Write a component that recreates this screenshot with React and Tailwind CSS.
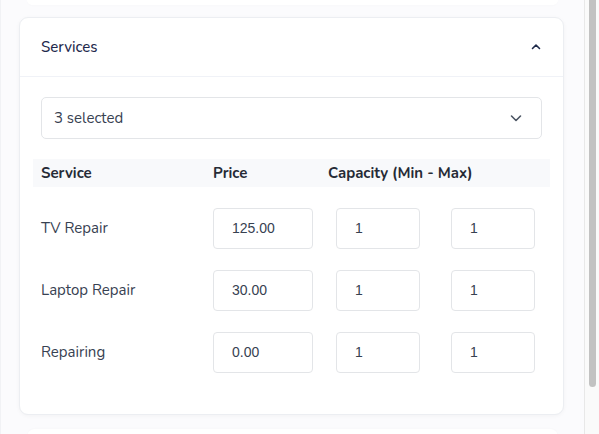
import React from "react";

const font = { fontFamily: "Nunito, Lato, 'Noto Sans', sans-serif" };

function ChevronUp() {
  return (
    <svg width="12" height="12" viewBox="0 0 12 12" fill="none">
      <path d="M2.5 7.5L6 4l3.5 3.5" stroke="#1e2a4a" strokeWidth="1.6" strokeLinecap="round" strokeLinejoin="round" />
    </svg>
  );
}

function ChevronDown() {
  return (
    <svg width="14" height="14" viewBox="0 0 14 14" fill="none">
      <path d="M2.5 5l4.5 4.5L11.5 5" stroke="#4b5563" strokeWidth="1.6" strokeLinecap="round" strokeLinejoin="round" />
    </svg>
  );
}

function Box({ value, w }) {
  return (
    <div
      className={`${w} h-[41px] shrink-0 flex items-center pl-[18px] border border-[#e3e5e8] rounded-[4px] bg-white text-[14px] text-[#374151]`}
      style={{ fontFamily: "'Liberation Sans', Arial, sans-serif" }}
    >
      {value}
    </div>
  );
}

const rows = [
  { name: "TV Repair", price: "125.00" },
  { name: "Laptop Repair", price: "30.00" },
  { name: "Repairing", price: "0.00" },
];

export default function App() {
  return (
    <div className="w-[599px] h-[434px] flex bg-[#fbfbfd] overflow-hidden" style={font}>
      <div className="flex-1 flex flex-col relative border-l border-[#f1f2f5] overflow-hidden">
        <div className="shrink-0 h-[5px] mx-[26px] bg-white rounded-b-[8px] shadow-[0_1px_2px_rgba(0,0,0,0.015)]" />
        <div className="shrink-0 mt-[12px] ml-[18px] w-[545px] h-[398px] bg-white border border-[#eceef2] rounded-[9px] shadow-[0_1px_4px_rgba(0,0,0,0.04)] flex flex-col">
          <div className="h-[59px] flex items-center justify-between pl-[21px] pr-[21px] border-b border-[#f0f2f7]">
            <span className="text-[15px] text-[#1f2a4d] font-medium">Services</span>
            <ChevronUp />
          </div>
          <div className="px-[21px] pt-[20px]">
            <div className="h-[42px] flex items-center justify-between pl-[12px] pr-[18px] border border-[#e3e5e8] rounded-[5px]">
              <span className="text-[15px] text-[#374151]">3 selected</span>
              <ChevronDown />
            </div>
            <div className="mt-[20px] -mx-[8px]">
              <div className="h-[28px] bg-[#f8f9fb] flex items-center text-[15px] font-bold text-[#262b36]">
                <div className="w-[172px] pl-[8px]">Service</div>
                <div className="w-[115px] pl-[8px]">Price</div>
                <div className="pl-[8px]">Capacity (Min - Max)</div>
              </div>
              <div className="flex flex-col gap-[21px] pt-[21px]">
                {rows.map((r) => (
                  <div key={r.name} className="flex items-center h-[41px]">
                    <div className="w-[180px] pl-[8px] text-[15px] text-[#374151]">{r.name}</div>
                    <Box value={r.price} w="w-[100px]" />
                    <div className="w-[23px] shrink-0" />
                    <Box value="1" w="w-[84px]" />
                    <div className="w-[31px] shrink-0" />
                    <Box value="1" w="w-[84px]" />
                  </div>
                ))}
              </div>
            </div>
          </div>
        </div>
        <div className="shrink-0 mt-[14px] mx-[26px] h-[20px] bg-white rounded-t-[8px] shadow-[0_-1px_2px_rgba(0,0,0,0.015)]" />
      </div>
      <div className="w-[15px] h-full bg-[#fafafa] border-l border-[#e8e8e8] flex justify-center">
        <div className="w-[7px] h-[387px] bg-[#c2c2c2] rounded-b-[4px]" />
      </div>
    </div>
  );
}
